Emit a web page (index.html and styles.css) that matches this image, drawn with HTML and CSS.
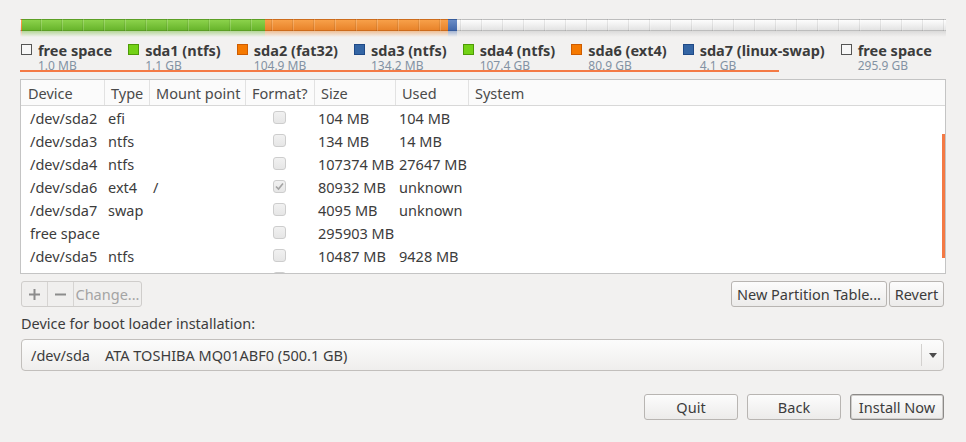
FILE: index.html
```html
<!DOCTYPE html>
<html lang="en">
<head>
    <meta charset="UTF-8">
    <title>Installation type</title>
    <link rel="stylesheet" href="styles.css">
</head>
<body>
    <div class="installer">
        <!-- disk usage bar -->
        <div class="disk-bar">
            <div class="seg seg-free" style="width: 1px"></div>
            <div class="seg seg-orange" style="width: 1px"></div>
            <div class="seg seg-green" style="width: 243px"></div>
            <div class="seg seg-orange" style="width: 183px"></div>
            <div class="seg seg-blue" style="width: 9px"></div>
            <div class="seg seg-free" style="width: 489px"></div>
        </div>

        <ul class="legend">
            <li class="legend-item">
                <span class="swatch swatch-free"></span>
                <div><div class="legend-name">free space</div><div class="legend-size">1.0 MB</div></div>
            </li>
            <li class="legend-item">
                <span class="swatch swatch-green"></span>
                <div><div class="legend-name">sda1 (ntfs)</div><div class="legend-size">1.1 GB</div></div>
            </li>
            <li class="legend-item">
                <span class="swatch swatch-orange"></span>
                <div><div class="legend-name">sda2 (fat32)</div><div class="legend-size">104.9 MB</div></div>
            </li>
            <li class="legend-item">
                <span class="swatch swatch-blue"></span>
                <div><div class="legend-name">sda3 (ntfs)</div><div class="legend-size">134.2 MB</div></div>
            </li>
            <li class="legend-item">
                <span class="swatch swatch-green"></span>
                <div><div class="legend-name">sda4 (ntfs)</div><div class="legend-size">107.4 GB</div></div>
            </li>
            <li class="legend-item">
                <span class="swatch swatch-orange"></span>
                <div><div class="legend-name">sda6 (ext4)</div><div class="legend-size">80.9 GB</div></div>
            </li>
            <li class="legend-item">
                <span class="swatch swatch-blue"></span>
                <div><div class="legend-name">sda7 (linux-swap)</div><div class="legend-size">4.1 GB</div></div>
            </li>
            <li class="legend-item">
                <span class="swatch swatch-free"></span>
                <div><div class="legend-name">free space</div><div class="legend-size">295.9 GB</div></div>
            </li>
        </ul>
        <div class="legend-focus"></div>

        <!-- partition list -->
        <div class="partitions">
            <div class="part-row part-head">
                <div class="col">Device</div>
                <div class="col">Type</div>
                <div class="col">Mount point</div>
                <div class="col">Format?</div>
                <div class="col">Size</div>
                <div class="col">Used</div>
                <div class="col">System</div>
            </div>
            <div class="part-body">
                <div class="part-row">
                    <div class="cell cell-device">/dev/sda2</div><div class="cell">efi</div><div class="cell"></div>
                    <div class="cell cell-check"><span class="check"></span></div>
                    <div class="cell">104 MB</div><div class="cell">104 MB</div><div class="cell"></div>
                </div>
                <div class="part-row">
                    <div class="cell cell-device">/dev/sda3</div><div class="cell">ntfs</div><div class="cell"></div>
                    <div class="cell cell-check"><span class="check"></span></div>
                    <div class="cell">134 MB</div><div class="cell">14 MB</div><div class="cell"></div>
                </div>
                <div class="part-row">
                    <div class="cell cell-device">/dev/sda4</div><div class="cell">ntfs</div><div class="cell"></div>
                    <div class="cell cell-check"><span class="check"></span></div>
                    <div class="cell">107374 MB</div><div class="cell">27647 MB</div><div class="cell"></div>
                </div>
                <div class="part-row">
                    <div class="cell cell-device">/dev/sda6</div><div class="cell">ext4</div><div class="cell">/</div>
                    <div class="cell cell-check">
                        <span class="check">
                            <svg width="11" height="11" viewBox="0 0 11 11"><polyline points="2,5.5 4.5,8 9,2.5" fill="none" stroke="#a3a3a3" stroke-width="1.6"/></svg>
                        </span>
                    </div>
                    <div class="cell">80932 MB</div><div class="cell">unknown</div><div class="cell"></div>
                </div>
                <div class="part-row">
                    <div class="cell cell-device">/dev/sda7</div><div class="cell">swap</div><div class="cell"></div>
                    <div class="cell cell-check"><span class="check"></span></div>
                    <div class="cell">4095 MB</div><div class="cell">unknown</div><div class="cell"></div>
                </div>
                <div class="part-row">
                    <div class="cell cell-device">free space</div><div class="cell"></div><div class="cell"></div>
                    <div class="cell cell-check"><span class="check"></span></div>
                    <div class="cell">295903 MB</div><div class="cell"></div><div class="cell"></div>
                </div>
                <div class="part-row">
                    <div class="cell cell-device">/dev/sda5</div><div class="cell">ntfs</div><div class="cell"></div>
                    <div class="cell cell-check"><span class="check"></span></div>
                    <div class="cell">10487 MB</div><div class="cell">9428 MB</div><div class="cell"></div>
                </div>
                <div class="part-row">
                    <div class="cell"></div><div class="cell"></div><div class="cell"></div>
                    <div class="cell cell-check"><span class="check"></span></div>
                    <div class="cell"></div><div class="cell"></div><div class="cell"></div>
                </div>
            </div>
            <div class="scroll-thumb"></div>
        </div>

        <div class="part-actions">
            <div class="tool-group">
                <span class="tool tool-add">
                    <svg width="11" height="11" viewBox="0 0 11 11"><path d="M5.5 0v11M0 5.5h11" stroke="#8c8c8c" stroke-width="2"/></svg>
                </span>
                <span class="tool tool-remove">
                    <svg width="11" height="11" viewBox="0 0 11 11"><path d="M0 5.5h11" stroke="#8c8c8c" stroke-width="2"/></svg>
                </span>
                <span class="tool tool-change">Change...</span>
            </div>
            <div class="table-buttons">
                <button class="btn btn-new-table">New Partition Table...</button>
                <button class="btn btn-revert">Revert</button>
            </div>
        </div>

        <div class="boot-label">Device for boot loader installation:</div>
        <div class="combo">
            <span class="combo-device">/dev/sda</span>
            <span class="combo-model">ATA TOSHIBA MQ01ABF0 (500.1 GB)</span>
            <span class="combo-arrow">
                <svg width="8" height="5" viewBox="0 0 8 5"><path d="M0 0h8L4 5z" fill="#4c4c4c"/></svg>
            </span>
        </div>

        <div class="nav-buttons">
            <button class="btn btn-nav">Quit</button>
            <button class="btn btn-nav">Back</button>
            <button class="btn btn-nav btn-default">Install Now</button>
        </div>
    </div>
</body>
</html>
```

FILE: styles.css
```css
* {
    box-sizing: border-box;
}
body {
    margin: 0;
    background: #f2f1f0;
    font-family: "Noto Sans", "Open Sans", sans-serif;
    font-size: 14.5px;
    color: #3c3c3c;
}
.installer {
    padding: 19px 20px 0 20px;
}

/* disk bar */
.disk-bar {
    display: flex;
    height: 18px;
    position: relative;
}
.disk-bar::after {
    content: "";
    position: absolute;
    left: 0;
    top: 0;
    right: 0;
    height: 12px;
    background: repeating-linear-gradient(90deg, transparent 0 19px, rgba(0, 0, 0, 0.08) 19px 20px, rgba(255, 255, 255, 0.18) 20px 21px, transparent 21px 20px);
    background-position: 1px 0;
}
.seg {
    height: 18px;
    background: linear-gradient(to bottom, var(--edge) 0 1px, var(--top) 1px, var(--bot) 11px, var(--edge) 11px 12px, var(--refl) 12px, transparent 18px);
}
.seg-green {
    --top: #8bd24b;
    --bot: #68b52c;
    --edge: #5c9f25;
    --refl: rgba(104, 180, 44, 0.45);
}
.seg-orange {
    --top: #f7a049;
    --bot: #e8832a;
    --edge: #cd6c1c;
    --refl: rgba(232, 131, 42, 0.45);
}
.seg-blue {
    --top: #6a8cc6;
    --bot: #4469ab;
    --edge: #365b9b;
    --refl: rgba(68, 105, 171, 0.45);
}
.seg-free {
    --top: #fdfdfd;
    --bot: #e3e3e3;
    --edge: #bdbdbd;
    --refl: rgba(190, 190, 190, 0.45);
}

/* legend */
.legend {
    display: flex;
    gap: 16px;
    list-style: none;
    margin: 5px 0 0 1px;
    padding: 0;
}
.legend-item {
    display: flex;
    gap: 6px;
}
.swatch {
    width: 11px;
    height: 11px;
    margin-top: 2px;
    border: 1px solid;
}
.swatch-free {
    border-color: #555;
    background: #f7f7f7;
}
.swatch-green {
    border-color: #4e9a06;
    background: #73d216;
}
.swatch-orange {
    border-color: #ce5c00;
    background: #f57900;
}
.swatch-blue {
    border-color: #204a87;
    background: #3465a4;
}
.legend-name {
    font-weight: bold;
    line-height: 16px;
}
.legend-size {
    font-size: 12px;
    line-height: 12px;
    margin-top: 2px;
    color: #8392a3;
}
.legend-focus {
    width: 759px;
    height: 2px;
    margin-top: -2px;
    background: #f47a45;
}

/* partition list */
.partitions {
    position: relative;
    margin-top: 7px;
    border: 1px solid #c4c4c4;
    background: #fff;
}
.part-row {
    display: grid;
    grid-template-columns: 83px 45px 96px 69px 81px 73px 1fr;
    height: 23px;
    align-items: center;
    white-space: nowrap;
}
.part-head {
    height: 26px;
    align-items: stretch;
    background: #fbfbfb;
    border-bottom: 1px solid #d8d8d8;
    color: #4a4a4a;
}
.part-head .col {
    display: flex;
    align-items: center;
    padding-left: 6px;
    border-left: 1px solid #e2e2e2;
}
.part-head .col:first-child {
    padding-left: 7px;
    border-left: none;
}
.part-body {
    height: 167px;
    overflow: hidden;
}
.cell {
    padding-left: 4px;
}
.cell-device {
    padding-left: 9px;
}
.cell-check {
    padding-left: 0;
    display: flex;
    justify-content: center;
}
.check {
    display: flex;
    align-items: center;
    justify-content: center;
    width: 13px;
    height: 13px;
    border: 1px solid #cdcdcd;
    border-radius: 3px;
    background: linear-gradient(#f1f1f1, #e6e6e6);
}
.scroll-thumb {
    position: absolute;
    right: 0;
    top: 54px;
    width: 3px;
    height: 124px;
    background: #f47a45;
}

/* buttons under the list */
.part-actions {
    display: flex;
    justify-content: space-between;
    margin-top: 7px;
    padding: 0 2px 0 1px;
}
.tool-group {
    display: flex;
    height: 26px;
    border: 1px solid #cfcdcb;
    border-radius: 3px;
    background: #f0efee;
    color: #a4a4a4;
}
.tool {
    display: flex;
    align-items: center;
    justify-content: center;
    border-left: 1px solid #d6d4d2;
}
.tool-add {
    width: 25px;
    border-left: none;
}
.tool-remove {
    width: 26px;
}
.tool-change {
    width: 68px;
}
.table-buttons {
    display: flex;
    gap: 2px;
}
.btn {
    height: 26px;
    padding: 0;
    border: 1px solid #b8b5b2;
    border-radius: 3px;
    background: linear-gradient(#fcfcfc, #ecebea);
    font: inherit;
    color: #3c3c3c;
}
.btn-new-table {
    width: 156px;
}
.btn-revert {
    width: 55px;
}

/* boot loader device */
.boot-label {
    margin-top: 7px;
    padding-left: 1px;
    line-height: 18px;
}
.combo {
    display: flex;
    align-items: center;
    height: 32px;
    margin: 7px 2px 0 1px;
    padding-left: 9px;
    border: 1px solid #c2bfbc;
    border-radius: 4px;
    background: linear-gradient(#fcfcfc, #efeeed);
}
.combo-device {
    width: 74px;
}
.combo-arrow {
    display: flex;
    align-items: center;
    justify-content: center;
    margin-left: auto;
    width: 22px;
    height: 22px;
    border-left: 1px solid #d3d1cf;
}

/* navigation */
.nav-buttons {
    display: flex;
    justify-content: flex-end;
    gap: 9px;
    margin-top: 23px;
    padding-right: 2px;
}
.btn-nav {
    width: 94px;
}
.btn-default {
    border-color: #8c8a88;
    box-shadow: inset 0 0 0 1px #cfcdcb;
}
```
